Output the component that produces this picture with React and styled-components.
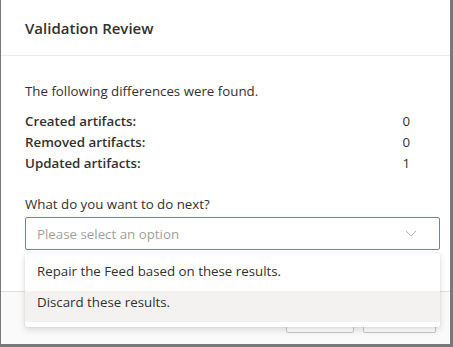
import React from "react";
import styled, { createGlobalStyle } from "styled-components";

const Global = createGlobalStyle`
  html, body {
    margin: 0;
    padding: 0;
    background: #787878;
  }
  body {
    font-family: "Segoe UI", "Open Sans", sans-serif;
    color: #323130;
  }
`;

const Backdrop = styled.div`
  width: 453px;
  height: 347px;
  overflow: hidden;
  padding-left: 1px;
  box-sizing: border-box;
`;

const Modal = styled.div`
  position: relative;
  width: 449px;
  height: 344px;
  background: #fff;
  display: flex;
  flex-direction: column;
`;

const Header = styled.div`
  height: 55px;
  border-bottom: 1px solid #edebe9;
  display: flex;
  align-items: center;
  padding: 0 24px;
`;

const Title = styled.h2`
  margin: 0;
  font-size: 15px;
  font-weight: 600;
  color: #323130;
`;

const Body = styled.div`
  flex: 1;
  padding: 25px 10px 0 24px;
  font-size: 13.3px;
  line-height: 20px;
`;

const Intro = styled.p`
  margin: 0 0 10px;
`;

const Stats = styled.div`
  width: 385px;
  display: grid;
  grid-template-columns: 1fr auto;
  line-height: 21px;
`;

const Label = styled.span`
  font-weight: 600;
`;

const Value = styled.span`
  text-align: right;
`;

const Question = styled.div`
  margin-top: 20px;
  margin-bottom: 3px;
`;

const Select = styled.div`
  height: 33px;
  box-sizing: border-box;
  border: 1px solid #6d85a9;
  border-radius: 2px;
  display: flex;
  align-items: center;
  justify-content: space-between;
  padding: 0 22px 0 11px;
  color: #a19f9d;
`;

const Menu = styled.div`
  position: absolute;
  left: 24px;
  top: 253px;
  width: 415px;
  background: #fff;
  box-shadow: 0 3px 7px rgba(0, 0, 0, 0.13), 0 0 2px rgba(0, 0, 0, 0.11);
  border-radius: 2px;
  padding-bottom: 5px;
  font-size: 13.3px;
  z-index: 2;
`;

const Option = styled.div`
  height: ${(p) => p.$h}px;
  box-sizing: border-box;
  padding: ${(p) => p.$pt}px 12px 0;
  line-height: 20px;
  background: ${(p) => (p.$active ? "#f3f2f1" : "#fff")};
  color: #323130;
`;

const Footer = styled.div`
  height: 53px;
  border-top: 1px solid #e1dfdd;
  background: #fafafa;
  display: flex;
  justify-content: flex-end;
  align-items: flex-start;
  gap: 9px;
  padding: 9px 14px 0 0;
  box-sizing: border-box;
`;

const Button = styled.button`
  width: ${(p) => p.$w}px;
  height: 32px;
  border: 1px solid #c8c6c4;
  border-radius: 2px;
  background: #fff;
  font-family: inherit;
  font-size: 13.3px;
  font-weight: 600;
  color: #323130;
`;

const Chevron = () => (
  <svg width="12" height="7" viewBox="0 0 12 7" fill="none">
    <path d="M1 1l5 5 5-5" stroke="#b3b0ad" strokeWidth="1" />
  </svg>
);

export default function App() {
  return (
    <>
      <Global />
      <Backdrop>
        <Modal>
          <Header>
            <Title>Validation Review</Title>
          </Header>
          <Body>
            <Intro>The following differences were found.</Intro>
            <Stats>
              <Label>Created artifacts:</Label>
              <Value>0</Value>
              <Label>Removed artifacts:</Label>
              <Value>0</Value>
              <Label>Updated artifacts:</Label>
              <Value>1</Value>
            </Stats>
            <Question>What do you want to do next?</Question>
            <Select>
              <span>Please select an option</span>
              <Chevron />
            </Select>
          </Body>
          <Footer>
            <Button $w={68}>OK</Button>
            <Button $w={73}>Cancel</Button>
          </Footer>
          <Menu>
            <Option $h={38} $pt={8}>Repair the Feed based on these results.</Option>
            <Option $h={31} $pt={1} $active>Discard these results.</Option>
          </Menu>
        </Modal>
      </Backdrop>
    </>
  );
}
